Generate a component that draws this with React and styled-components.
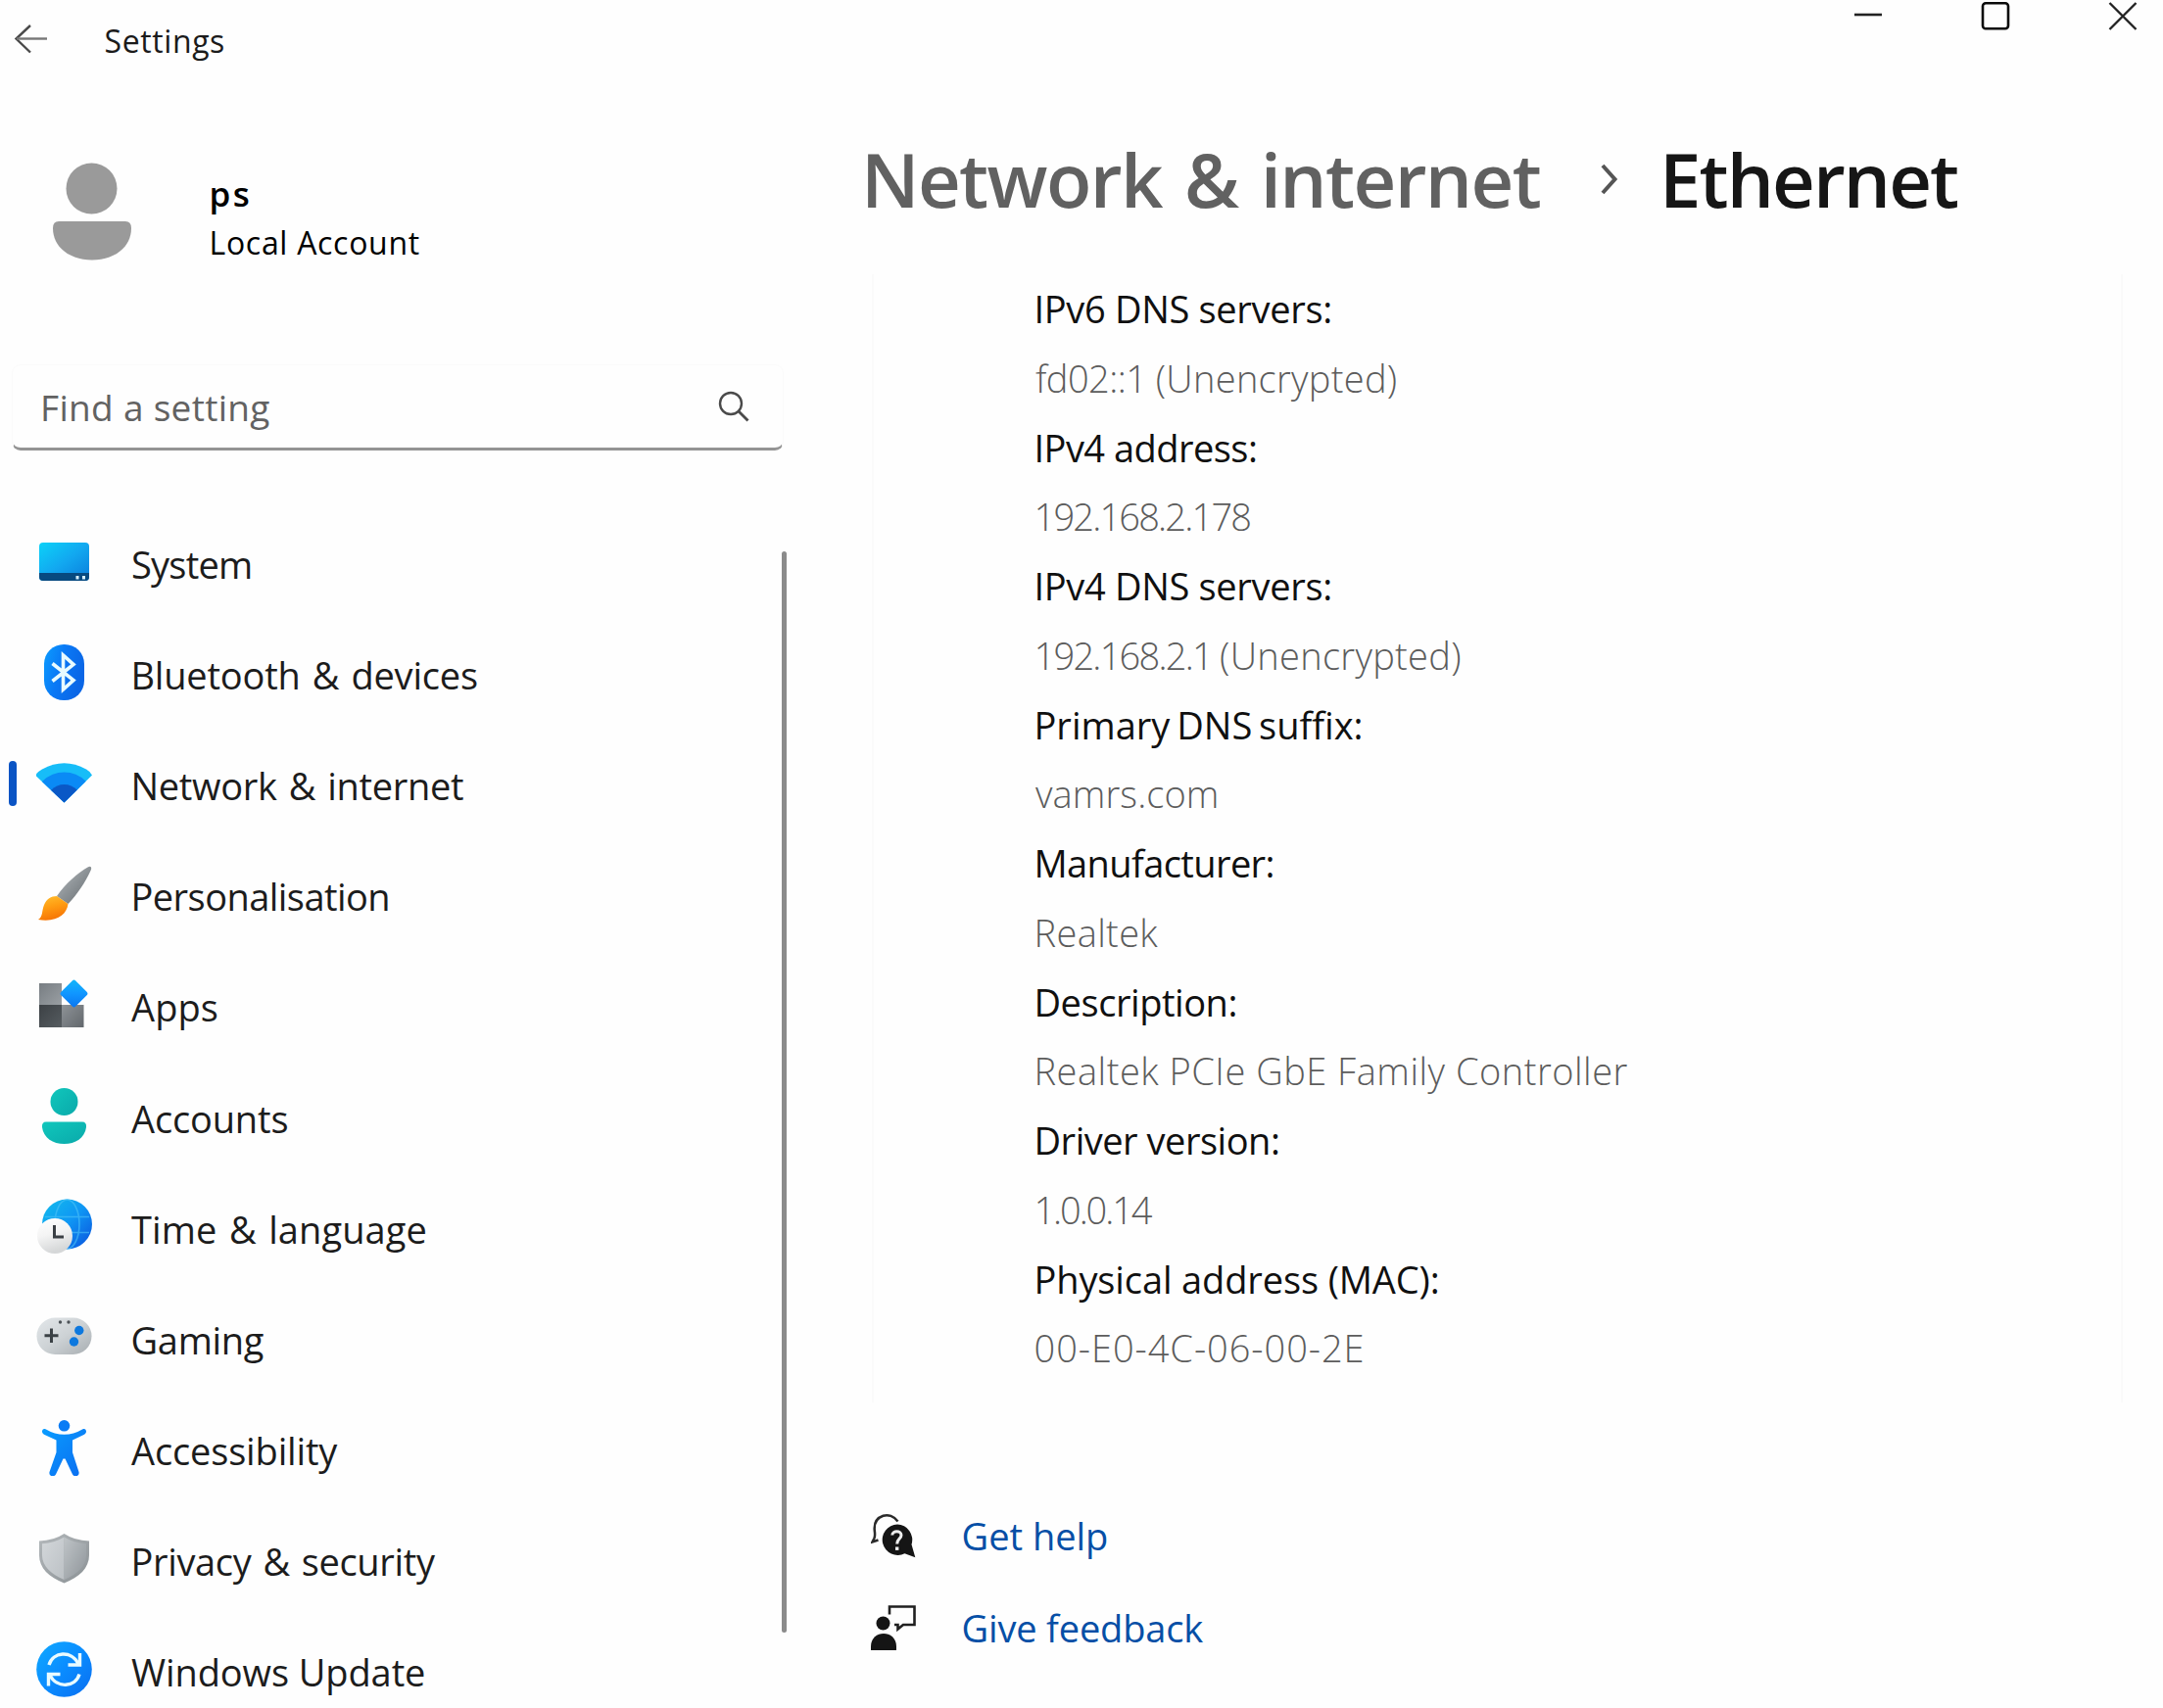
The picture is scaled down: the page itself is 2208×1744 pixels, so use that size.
import React from "react";
import styled, { createGlobalStyle } from "styled-components";

const GlobalStyle = createGlobalStyle`
  *, *::before, *::after { box-sizing: border-box; }
  html, body { margin: 0; padding: 0; background: #fefefe; overflow: hidden; }
  svg { display: block; flex: none; }
`;

const Window = styled.div`
  width: 2208px;
  height: 1744px;
  display: flex;
  flex-direction: column;
  overflow: hidden;
  background: #fefefe;
  color: #1b1b1b;
  font-family: "Open Sans", "Noto Sans", sans-serif;
`;

const TitleBar = styled.header`
  height: 80px;
  flex: none;
  display: flex;
  align-items: center;
  padding: 0 26px 0 14px;
`;

const AppTitle = styled.span`
  flex: 1;
  margin-left: 58.5px;
  font-size: 32px;
  line-height: 44px;
  letter-spacing: 0.6px;
  padding-top: 4px;
`;

const CaptionButtons = styled.div`
  align-self: flex-start;
  display: flex;
  gap: 100px;
  padding-top: 1px;
`;

const Body = styled.div`
  flex: 1;
  min-height: 0;
  display: flex;
`;

const Sidebar = styled.aside`
  width: 877px;
  flex: none;
  display: flex;
  flex-direction: column;
`;

const Profile = styled.div`
  display: flex;
  height: 100px;
  margin: 86px 0 0 54px;
  gap: 79.5px;
`;

const ProfileText = styled.div`
  padding-top: 7px;
  line-height: 50px;
  color: #000;
`;

const UserName = styled.div`
  font-size: 35px;
  font-weight: 600;
  letter-spacing: 2.4px;
`;

const AccountType = styled.div`
  font-size: 32px;
  letter-spacing: 0.7px;
`;

const SearchBox = styled.div`
  width: 788px;
  height: 88px;
  flex: none;
  margin: 106px 0 0 12px;
  padding: 0 34px 0 28px;
  display: flex;
  align-items: center;
  justify-content: space-between;
  border: 1px solid #fafafa;
  border-bottom: 3px solid #949494;
  border-radius: 9px;
  font-size: 37px;
  letter-spacing: 0.3px;
  color: #626262;
`;

const NavArea = styled.div`
  display: flex;
  margin-top: 57px;
`;

const NavList = styled.nav`
  width: 798px;
`;

const NavItem = styled.div`
  height: 113.1px;
  display: flex;
  align-items: center;
  padding-left: 9px;
`;

const SelectionMark = styled.span`
  width: 8px;
  height: 46px;
  border-radius: 4px;
  margin-right: 20px;
  background: ${(p) => (p.$active ? "#0a54c4" : "transparent")};
`;

const NavLabel = styled.span`
  margin-left: ${(p) => 39.5 + (p.$inset || 0)}px;
  padding-top: 5px;
  font-size: 38px;
  line-height: 52px;
  letter-spacing: ${(p) => p.$spacing}px;
  word-spacing: ${(p) => p.$word || 0}px;
  white-space: nowrap;
  color: #1c1c1c;
`;

const ScrollThumb = styled.div`
  width: 5px;
  height: 1104px;
  margin-top: 46px;
  border-radius: 3px;
  background: #8b8b8b;
`;

const Main = styled.main`
  flex: 1;
  padding-top: 51px;
  display: flex;
  flex-direction: column;
`;

const Breadcrumb = styled.h1`
  margin: 0 0 0 2px;
  display: flex;
  align-items: center;
  height: 104px;
  font-size: 76px;
  line-height: 104px;
  font-weight: 600;
  white-space: nowrap;
`;

const CrumbParent = styled.span`
  width: 754px;
  color: #616161;
  letter-spacing: -1.6px;
  word-spacing: 5px;
`;

const CrumbCurrent = styled.span`
  margin-left: 41px;
  letter-spacing: -1.9px;
  color: #161616;
`;

const Card = styled.section`
  width: 1277px;
  margin: 45px 0 0 13px;
  padding: 0 0 20px 163.5px;
  border: solid #fafafa;
  border-width: 0 2px;
`;

const DetailList = styled.dl`
  margin: 0;
  font-size: 38px;
  line-height: 70.75px;
  white-space: nowrap;
`;

const DetailName = styled.dt`
  letter-spacing: ${(p) => p.$spacing}px;
  word-spacing: ${(p) => p.$word || 0}px;
  color: #101010;
`;

const DetailValue = styled.dd`
  margin: 0 0 0 ${(p) => p.$inset || 0}px;
  font-weight: 300;
  letter-spacing: ${(p) => p.$spacing}px;
  color: #5c5c5c;
`;

const DetailNote = styled.span`
  letter-spacing: 0.3px;
`;

const Links = styled.div`
  margin: 89px 0 0 12px;
`;

const LinkRow = styled.a`
  height: 94px;
  display: flex;
  align-items: center;
  gap: 46.5px;
  font-size: 38px;
  line-height: 52px;
  letter-spacing: ${(p) => p.$spacing}px;
  color: #064fa6;
`;

const NavIcon = ({ children }) => (
  <svg width="57" height="57" viewBox="0 0 57 57">{children}</svg>
);

const Gradient = ({ id, stops, x2 = 1, y2 = 1 }) => (
  <linearGradient id={id} x1="0" y1="0" x2={x2} y2={y2}>
    {stops.map((c, i) => (
      <stop key={c + i} offset={i / (stops.length - 1)} stopColor={c} />
    ))}
  </linearGradient>
);

const SystemIcon = () => (
  <NavIcon>
    <defs>
      <Gradient id="sys" stops={["#0cd2f8", "#12a8f0", "#0a7ddb"]} />
      <clipPath id="sysClip"><rect x="3" y="9" width="51" height="39" rx="4" /></clipPath>
    </defs>
    <g clipPath="url(#sysClip)">
      <rect x="3" y="9" width="51" height="39" fill="url(#sys)" />
      <rect x="3" y="40" width="51" height="8" fill="#074a80" />
      <rect x="40.500" y="43" width="3" height="3.500" fill="#d5efff" />
      <rect x="47" y="43" width="3" height="3.500" fill="#d5efff" />
    </g>
  </NavIcon>
);

const BluetoothIcon = () => (
  <NavIcon>
    <defs><Gradient id="bt" x2={1} y2={0.4} stops={["#0b9dff", "#0a78f5", "#0a66e6"]} /></defs>
    <rect x="8" y="0" width="41" height="57" rx="20" fill="url(#bt)" />
    <path d="M16.500 19.500 L38 36.500 L27.500 46 V11 L38 20.500 L16.500 37.500" fill="none" stroke="#e8fbff" strokeWidth="3.600" strokeLinejoin="miter" />
  </NavIcon>
);

const WifiIcon = () => (
  <NavIcon>
    <defs>
      <clipPath id="fan"><path d="M-1 20.500 Q1.500 17 6 14.500 Q28.500 2 51 14.500 Q55.500 17 57 20.500 L28.500 48.500 Z" /></clipPath>
    </defs>
    <g clipPath="url(#fan)">
      <rect x="-1" y="0" width="60" height="57" fill="#17bdf8" />
      <circle cx="28.500" cy="48.500" r="31" fill="#0a8af5" />
      <circle cx="28.500" cy="48.500" r="18.500" fill="#0a58c6" />
    </g>
  </NavIcon>
);

const BrushIcon = () => (
  <NavIcon>
    <defs>
      <Gradient id="handle" stops={["#b9bec2", "#8c9296", "#666c70"]} />
      <Gradient id="bristle" x2={0.3} stops={["#ffc02e", "#ff9d12", "#f77706"]} />
    </defs>
    <path d="M53 1.200 C56 -0.500 57 2 55.500 5 C50 17 42 29 32.500 39 L21 31 C30 18 42 7.500 53 1.200 Z" fill="url(#handle)" />
    <path d="M21 31 L32.500 39 C31 50 21 58 2 55 C7 52 5.500 46 8 40 C10.500 34 15 31 21 31 Z" fill="url(#bristle)" />
  </NavIcon>
);

const AppsIcon = () => (
  <NavIcon>
    <defs>
      <Gradient id="tileA" stops={["#777d82", "#9ba0a4"]} />
      <Gradient id="tileB" stops={["#3c4145", "#565c60"]} />
      <Gradient id="tileC" stops={["#8e9397", "#62676c"]} />
      <Gradient id="gem" stops={["#12b8fa", "#1096ff", "#0a74f0"]} />
    </defs>
    <rect x="3" y="7" width="23" height="23" fill="url(#tileA)" />
    <rect x="3" y="29" width="23" height="23" fill="url(#tileB)" />
    <rect x="26" y="29" width="22.500" height="23" fill="url(#tileC)" />
    <rect x="28" y="7" width="21" height="21" rx="2.500" transform="rotate(45 38.500 17.500)" fill="url(#gem)" />
  </NavIcon>
);

const AccountsIcon = () => (
  <NavIcon>
    <defs><Gradient id="acc" stops={["#10c7bc", "#0aa9aa"]} /></defs>
    <circle cx="28.500" cy="14" r="14" fill="url(#acc)" />
    <path d="M10 34.500 H47 Q51.500 34.500 51 40 C49.500 51 40 57 28.500 57 S7.500 51 6 40 Q5.500 34.500 10 34.500 Z" fill="url(#acc)" />
  </NavIcon>
);

const TimeIcon = () => (
  <NavIcon>
    <defs>
      <Gradient id="globe" stops={["#12bdec", "#0f96f4", "#0a50dc"]} />
      <Gradient id="clock" x2={0.3} stops={["#ffffff", "#f4f4f4", "#d5d7d8"]} />
    </defs>
    <circle cx="31.500" cy="26" r="25.500" fill="url(#globe)" />
    <g fill="none" stroke="#4dc4f8" strokeWidth="1.600" opacity="0.6">
      <path d="M9 18.500 H54 M9 34.500 H54" />
      <ellipse cx="31.500" cy="26" rx="12.500" ry="25" />
    </g>
    <circle cx="19" cy="38" r="18" fill="url(#clock)" />
    <path d="M18.500 27 V39 H28" fill="none" stroke="#3a3f44" strokeWidth="3" />
  </NavIcon>
);

const GamingIcon = () => (
  <NavIcon>
    <defs><Gradient id="pad" stops={["#e3e7ea", "#cdd2d5", "#a7adb1"]} /></defs>
    <rect x="0.500" y="8.500" width="56" height="37.500" rx="18.700" fill="url(#pad)" />
    <path d="M15.500 19.500 V34 M8.500 26.800 H22.500" stroke="#3b4145" strokeWidth="3" />
    <circle cx="24.500" cy="13" r="1.700" fill="#4c5257" />
    <circle cx="33" cy="13" r="1.700" fill="#4c5257" />
    <circle cx="43.800" cy="21.500" r="4.700" fill="#0d78de" />
    <circle cx="38.500" cy="33" r="4.700" fill="#0d78de" />
  </NavIcon>
);

const AccessibilityIcon = () => (
  <NavIcon>
    <defs><Gradient id="person" stops={["#0a9dff", "#0a6cf0"]} /></defs>
    <circle cx="28.500" cy="5.800" r="5.800" fill="#0a7cf5" />
    <path d="M9.500 9.200 Q28.500 20.500 47.500 9.200 C51 7.500 52.500 13 49 14.700 L37 20.500 V33 L43.500 53 C44.500 57.500 38.500 59 36.800 55 L29.500 39.500 H27.500 L20.200 55 C18.500 59 12.500 57.500 13.500 53 L20.500 33 V20.500 L8 14.700 C4.500 13 6 7.500 9.500 9.200 Z" fill="url(#person)" />
  </NavIcon>
);

const ShieldIcon = () => (
  <NavIcon>
    <defs>
      <Gradient id="rim" stops={["#b3b8bb", "#8b9195"]} />
      <Gradient id="shieldL" stops={["#d3d7da", "#bcc1c5"]} />
      <Gradient id="shieldR" stops={["#bfc4c7", "#8f959a"]} />
    </defs>
    <path d="M28.500 3 Q39 10 54 10.500 V25 C54 38 44 47.500 28.500 53.500 C13 47.500 3 38 3 25 V10.500 Q18 10 28.500 3 Z" fill="url(#rim)" />
    <path d="M28.500 6.500 V50 C15 44.500 6 36 6 25 V13.200 Q18.500 12.500 28.500 6.500 Z" fill="url(#shieldL)" />
    <path d="M28.500 6.500 V50 C42 44.500 51 36 51 25 V13.200 Q38.500 12.500 28.500 6.500 Z" fill="url(#shieldR)" />
  </NavIcon>
);

const UpdateIcon = () => (
  <NavIcon>
    <defs><Gradient id="upd" stops={["#10aaff", "#0a8cff", "#0a6ef0"]} /></defs>
    <circle cx="28.500" cy="28.500" r="28.300" fill="url(#upd)" />
    <g fill="none" stroke="#e9fbff" strokeWidth="3.400">
      <path d="M13 24 C17 10.500 36 8.500 43 23" />
      <path d="M44.500 12 V24 H32.500" />
      <path d="M44 33.500 C40 47 21 48.500 14 34.500" />
      <path d="M12.500 45.500 V33.500 H24.500" />
    </g>
  </NavIcon>
);

const HelpIcon = () => (
  <svg width="46" height="46" viewBox="0 0 46 46">
    <path d="M27.500 8.500 C23.500 3 17.500 1 12.500 2.800 C6 5 3 10.500 3.800 18 C4.200 21.500 4.500 23 3.500 25.500 L1.500 29.500 L7.500 27.500" fill="none" stroke="#2a2a2a" strokeWidth="2.500" />
    <path d="M27 11.500 A15.700 15.700 0 0 1 41.500 32 L45.300 45.300 L34.500 41.200 A15.700 15.700 0 1 1 27 11.500 Z" fill="#151515" />
    <path d="M21.800 22.500 C22 17.500 31 17.500 31 22.500 C31 26.500 26.700 26 26.700 31.500" fill="none" stroke="#eee" strokeWidth="3" />
    <rect x="25" y="34.500" width="3.400" height="3.400" fill="#eee" />
  </svg>
);

const FeedbackIcon = () => (
  <svg width="46" height="46" viewBox="0 0 46 46">
    <circle cx="12.500" cy="18.500" r="7" fill="#151515" />
    <path d="M0 46 V42 C0 24.500 26 24.500 26 42 V46 Z" fill="#151515" />
    <path d="M19 9.500 V1.500 H44.500 V20 H33 L27.500 24.500 V20 H24" fill="none" stroke="#202020" strokeWidth="2.600" />
  </svg>
);

const NAV = [
  { label: "System", icon: SystemIcon, spacing: -0.77, inset: 0.5 },
  { label: "Bluetooth & devices", icon: BluetoothIcon, spacing: -0.2, word: 2.5 },
  { label: "Network & internet", icon: WifiIcon, spacing: -0.3, word: 2.5 },
  { label: "Personalisation", icon: BrushIcon, spacing: -0.55 },
  { label: "Apps", icon: AppsIcon, spacing: 0.1, inset: 0.5 },
  { label: "Accounts", icon: AccountsIcon, spacing: -0.15, inset: 0.5 },
  { label: "Time & language", icon: TimeIcon, spacing: 0.1, word: 2.5, inset: 0.5 },
  { label: "Gaming", icon: GamingIcon, spacing: -0.3 },
  { label: "Accessibility", icon: AccessibilityIcon, spacing: -0.15, inset: 0.5 },
  { label: "Privacy & security", icon: ShieldIcon, spacing: -0.35, word: 2.5 },
  { label: "Windows Update", icon: UpdateIcon, spacing: -0.1, inset: 0.5 },
];

const SELECTED = "Network & internet";

const DETAILS = [
  { name: "IPv6 DNS servers:", value: "fd02::1", note: "(Unencrypted)", ns: -0.32, vs: -0.55, inset: 1.5 },
  { name: "IPv4 address:", value: "192.168.2.178", ns: -0.53, vs: -1.8 },
  { name: "IPv4 DNS servers:", value: "192.168.2.1", note: "(Unencrypted)", ns: -0.32, vs: -1.75 },
  { name: "Primary DNS suffix:", value: "vamrs.com", ns: 0, word: -3, vs: 0.1, inset: 1.5 },
  { name: "Manufacturer:", value: "Realtek", ns: -0.6, vs: 0.35 },
  { name: "Description:", value: "Realtek PCIe GbE Family Controller", ns: -0.45, vs: 0.5 },
  { name: "Driver version:", value: "1.0.0.14", ns: -0.48, vs: -2.1 },
  { name: "Physical address (MAC):", value: "00-E0-4C-06-00-2E", ns: -0.12, vs: 0.95 },
];

export default function App() {
  return (
    <Window>
      <GlobalStyle />
      <TitleBar>
        <svg width="34" height="30" viewBox="0 0 34 30" fill="none" stroke="#4a4a4a" strokeWidth="2.400">
          <path d="M17 1 L2.500 14.500 L17 28.500" />
          <path d="M3 14.500 H34" stroke="#777" />
        </svg>
        <AppTitle>Settings</AppTitle>
        <CaptionButtons>
          <svg width="30" height="30" viewBox="0 0 30 30"><path d="M1 14 H29" stroke="#222" strokeWidth="2.600" /></svg>
          <svg width="30" height="30" viewBox="0 0 30 30"><rect x="2" y="2.200" width="26" height="26" rx="3" fill="none" stroke="#0a0a0a" strokeWidth="2.600" /></svg>
          <svg width="30" height="30" viewBox="0 0 30 30"><path d="M1.500 2 L28.500 29 M28.500 2 L1.500 29" stroke="#222" strokeWidth="2.400" /></svg>
        </CaptionButtons>
      </TitleBar>
      <Body>
        <Sidebar>
          <Profile>
            <svg width="80" height="100" viewBox="0 0 80 100" fill="#9a9a9a">
              <circle cx="39.500" cy="26.500" r="26" />
              <path d="M6 60 H74 Q80 60 80 67 C80 87 62 99.500 40 99.500 S0 87 0 67 Q0 60 6 60 Z" />
            </svg>
            <ProfileText>
              <UserName>ps</UserName>
              <AccountType>Local Account</AccountType>
            </ProfileText>
          </Profile>
          <SearchBox>
            <span>Find a setting</span>
            <svg width="32" height="32" viewBox="0 0 32 32" fill="none" stroke="#4a4a4a" strokeWidth="2.400">
              <circle cx="13" cy="13" r="11" />
              <path d="M20.500 20.500 L30.500 30.500" strokeWidth="2.800" />
            </svg>
          </SearchBox>
          <NavArea>
            <NavList>
              {NAV.map(({ label, icon: Icon, spacing, word, inset }) => (
                <NavItem key={label}>
                  <SelectionMark $active={label === SELECTED} />
                  <Icon />
                  <NavLabel $spacing={spacing} $word={word} $inset={inset}>{label}</NavLabel>
                </NavItem>
              ))}
            </NavList>
            <ScrollThumb />
          </NavArea>
        </Sidebar>
        <Main>
          <Breadcrumb>
            <CrumbParent>Network &amp; internet</CrumbParent>
            <svg width="20" height="32" viewBox="0 0 20 32" fill="none" stroke="#555" strokeWidth="4">
              <path d="M3 2 L15.500 16 L3 30" />
            </svg>
            <CrumbCurrent>Ethernet</CrumbCurrent>
          </Breadcrumb>
          <Card>
            <DetailList>
              {DETAILS.map((d) => (
                <React.Fragment key={d.name}>
                  <DetailName $spacing={d.ns} $word={d.word}>{d.name}</DetailName>
                  <DetailValue $spacing={d.vs} $inset={d.inset}>
                    {d.value}
                    {d.note && <> <DetailNote>{d.note}</DetailNote></>}
                  </DetailValue>
                </React.Fragment>
              ))}
            </DetailList>
          </Card>
          <Links>
            <LinkRow $spacing={0}><HelpIcon />Get help</LinkRow>
            <LinkRow $spacing={-0.16}><FeedbackIcon />Give feedback</LinkRow>
          </Links>
        </Main>
      </Body>
    </Window>
  );
}
